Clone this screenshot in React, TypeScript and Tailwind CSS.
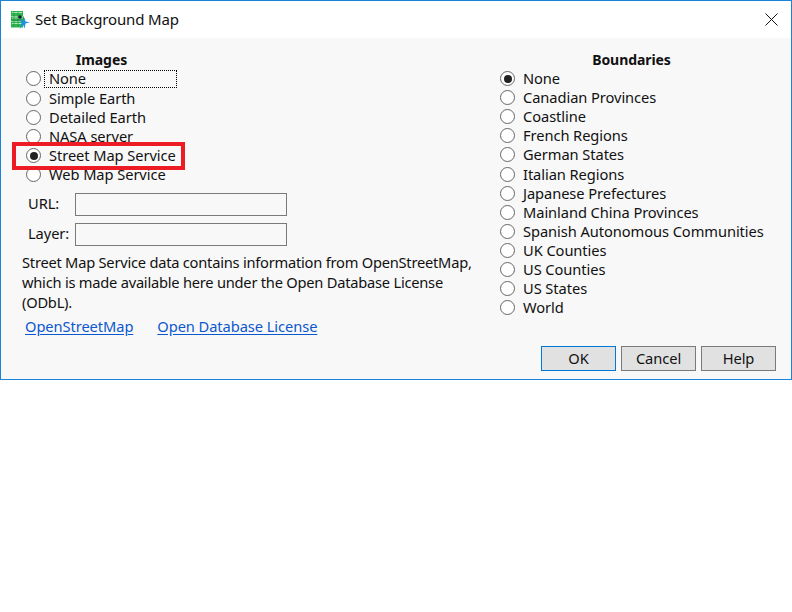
const images = ["None", "Simple Earth", "Detailed Earth", "NASA server", "Street Map Service", "Web Map Service"];
const boundaries = ["None", "Canadian Provinces", "Coastline", "French Regions", "German States", "Italian Regions", "Japanese Prefectures", "Mainland China Provinces", "Spanish Autonomous Communities", "UK Counties", "US Counties", "US States", "World"];

function Radio({ label, checked, focus }: { label: string; checked?: boolean; focus?: boolean }) {
  return (
    <div className="flex h-[19px] items-center">
      <span className="flex h-[15px] w-[15px] shrink-0 items-center justify-center rounded-full border border-[#666] bg-white">
        {checked && <span className="h-[8px] w-[8px] rounded-full bg-[#222]" />}
      </span>
      <span className={focus ? "ml-[3px] h-[18px] w-[133px] border border-dotted border-black pl-[4px] leading-[15px]" : "ml-[8px] leading-[19px]"}>{label}</span>
    </div>
  );
}

function Field({ label }: { label: string }) {
  return (
    <div className="flex h-[23px] items-center">
      <span className="-mt-[3px] w-[47px]">{label}</span>
      <div className="h-[23px] w-[212px] border border-[#7a7a7a] bg-[#f8f8f8]" />
    </div>
  );
}

function Btn({ label, primary }: { label: string; primary?: boolean }) {
  return (
    <div className={`flex h-[25px] w-[75px] items-center justify-center bg-[#e1e1e1] border pb-[2px] ${primary ? "border-[#0078d7]" : "border-[#7a7a7a]"}`}>{label}</div>
  );
}

export default function App() {
  return (
    <div className="h-[612px] w-[792px] bg-white text-[14.67px] tracking-[-0.07px] text-[#111]" style={{ fontFamily: '"Noto Sans", sans-serif' }}>
      <div className="flex h-[380px] w-[792px] flex-col border border-[#1883d7]">
        <div className="flex h-[37px] shrink-0 items-center bg-white pl-[9px] pr-[13px]">
          <svg width="20" height="20" viewBox="0 0 20 20">
            <path d="M1 1h12v5H1z" fill="#2fb650" />
            <path d="M1 6.5h13v5H1z" fill="#27a548" />
            <path d="M1 12h12v5.5H1z" fill="#2fb650" />
            <path d="M2 2.5h10M2 8h11M2 13.5h10" stroke="#a8efb8" strokeWidth="1.2" />
            <path d="M4 1v16M8 1v16" stroke="#1d8c3a" strokeWidth=".6" />
            <circle cx="10" cy="7" r="1.8" fill="#10202c" />
            <path d="M10 9l3 2 1.5-3.5 1 4 4.5.8-4.5 1.2-.8 5-1.7-3.8-3.5 4.3 2-5.300z" fill="#1f8fe0" />
          </svg>
          <span className="ml-[5px] text-[15px] tracking-[-0.15px]">Set Background Map</span>
          <svg className="ml-auto" width="13" height="13" viewBox="0 0 13 13">
            <path d="M.5.5l12 12M12.5.5l-12 12" stroke="#111" strokeWidth="1" />
          </svg>
        </div>
        <div className="relative flex flex-1 flex-col bg-[#f8f8f8]">
          <div className="flex flex-1">
            <div className="w-[499px] pl-[21px] pt-[12px]">
              <div className="w-[156px] pl-[3px] text-center text-[14px] font-bold leading-[19px]">Images</div>
              <div className="pl-[4px]">
                <div className="mb-[1px]"><Radio label="None" focus /></div>
                {images.slice(1).map((l) => <Radio key={l} label={l} checked={l === "Street Map Service"} />)}
              </div>
              <div className="mt-[9px] flex flex-col gap-[7px] pl-[6px]">
                <Field label="URL:" />
                <Field label="Layer:" />
              </div>
              <p className="mt-[6px] w-[455px] leading-[20px] tracking-[-0.23px]">
                Street Map Service data contains information from OpenStreetMap, which is made available here under the Open Database License (ODbL).
              </p>
              <div className="mt-[4px] flex gap-[24px] pl-[3px] leading-[20px] text-[#0b57d0]">
                <span className="underline underline-offset-2">OpenStreetMap</span>
                <span className="underline underline-offset-2">Open Database License</span>
              </div>
            </div>
            <div className="pt-[12px]">
              <div className="w-[263px] text-center text-[14px] font-bold leading-[19px]">Boundaries</div>
              {boundaries.map((l, i) => (
                <div key={l} className={i === 5 ? "mt-[1px]" : ""}>
                  <Radio label={l} checked={i === 0} />
                </div>
              ))}
            </div>
          </div>
          <div className="flex justify-end gap-[5px] pb-[8px] pr-[15px]">
            <Btn label="OK" primary />
            <Btn label="Cancel" />
            <Btn label="Help" />
          </div>
          <div className="absolute left-[11px] top-[104px] h-[28px] w-[173px] border-[4px] border-[#ed1c24]" />
        </div>
      </div>
    </div>
  );
}
